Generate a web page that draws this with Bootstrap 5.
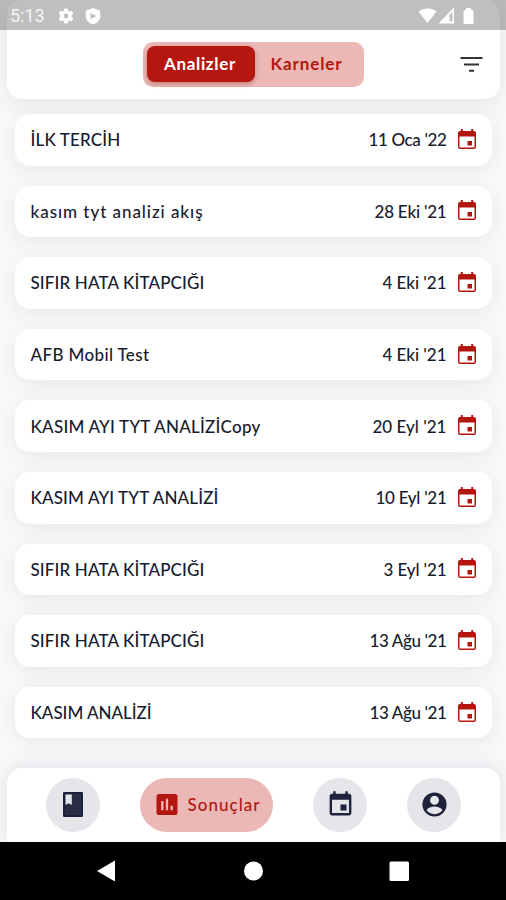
<!DOCTYPE html>
<html lang="tr">
<head>
<meta charset="utf-8">
<meta name="viewport" content="width=device-width, initial-scale=1">
<title>Sonuçlar</title>
<link href="https://cdn.jsdelivr.net/npm/bootstrap@5.3.0/dist/css/bootstrap.min.css" rel="stylesheet">
<style>
body{font-family:Lato,"Noto Sans",sans-serif;background:#f9f9fa;color:#191b2e;font-size:17px;font-weight:500;line-height:1}
.screen{height:900px}
.statusbar{height:30px;background:rgba(0,0,0,.25);color:#f4f4f4;font:400 18px/30px Roboto,sans-serif;padding:1px 32px 0 10px}
.topbar{height:98.5px;margin:0 6px 0 7px;border-radius:15px;background:#fff;box-shadow:0 4px 22px rgba(50,50,95,.1);padding-top:42px}
.switcher{width:221px;height:44.5px;margin-left:136px;border-radius:10px;background:#ebb8b5;padding:4px;color:#b3150f;font-size:17px;font-weight:700}
.switcher .btn{font:inherit;border:0;line-height:1;padding:0 2px 1px 0;border-radius:8px}
.seg-on{width:108px;height:36px;background:#b51710;color:#fff;box-shadow:0 2px 5px rgba(120,20,10,.35)}
.seg-on:hover{background:#b51710;color:#fff}
.seg-off{color:#b3150f;width:105px}
.results{gap:20px;padding:15.5px 14px 0 15px}
.result{height:51.6px;border:0;border-radius:15px;background:#fff;padding:0 12.5px 0 15.5px;box-shadow:0 4px 20px rgba(50,50,80,.09)}
.result svg{margin-left:7px}
.tabbar{height:73.5px;margin:0 6px 0 7px;border-radius:15px 15px 0 0;background:#fff;box-shadow:0 -2px 20px rgba(50,50,95,.12);padding:9.5px 39px 0;gap:40px}
.tab{height:54px;width:54px;border-radius:27px;background:#e5e5ea;color:#20223c}
.tab-on{width:133px;background:#ebb8b5;color:#b3150f;gap:7px}
.keys{height:58.5px;background:#000}
</style>
<script src="https://cdn.jsdelivr.net/npm/bootstrap@5.3.0/dist/js/bootstrap.bundle.min.js"></script>
</head>
<body>
<svg class="d-none" xmlns="http://www.w3.org/2000/svg">
<symbol id="cal" viewBox="0 0 24 24"><path fill="currentColor" d="M17 12h-5v5h5v-5zM16 1v2H8V1H6v2H5c-1.1 0-2 .9-2 2v14c0 1.1.9 2 2 2h14c1.1 0 2-.9 2-2V5c0-1.1-.9-2-2-2h-1V1h-2zm3 18H5V8h14v11z"/></symbol>
<symbol id="cal-thin" viewBox="0 0 24 24"><path fill="currentColor" d="M17 13h-4.500v4.500H17V13zM16.200 1v2H7.800V1H5.800v2H5c-1.100 0-2 .9-2 2v14c0 1.100.9 2 2 2h14c1.100 0 2-.9 2-2V5c0-1.100-.9-2-2-2h-.8V1h-2zm3.300 18.500h-15V8.500h15v11z"/></symbol>
</svg>
<div class="screen d-flex flex-column position-relative overflow-hidden">
<div class="statusbar d-flex align-items-center position-absolute top-0 start-0 w-100 z-1">
<span id="clock">5:13</span>
<svg style="margin-left:12px" width="18" height="18" viewBox="0 0 24 24" fill="#fff"><path d="M19.4 13c0-.3.1-.6.1-1s0-.7-.1-1l2.1-1.600c.2-.2.2-.4.1-.6l-2-3.500c-.1-.2-.3-.3-.6-.2l-2.500 1c-.5-.4-1.100-.7-1.700-1l-.4-2.600c0-.3-.2-.4-.4-.4h-4c-.3 0-.5.100-.5.400l-.4 2.600c-.6.3-1.200.6-1.700 1l-2.500-1c-.2-.1-.5 0-.6.2l-2 3.500c-.1.200-.1.500.1.600L4.600 11v2l-2.100 1.600c-.2.100-.3.400-.1.600l2 3.500c.1.200.3.300.6.200l2.500-1c.5.400 1.100.7 1.700 1l.4 2.600c0 .3.200.4.500.4h4c.2 0 .5-.1.500-.4l.4-2.600c.6-.3 1.200-.6 1.700-1l2.500 1c.2.100.5 0 .6-.2l2-3.500c.1-.2.1-.4-.1-.6L19.400 13zM12 15.200a3.200 3.200 0 110-6.400 3.200 3.200 0 010 6.400z"/></svg>
<svg style="margin-left:10px" width="16" height="18" viewBox="0 0 16 18"><path fill="#fff" d="M8 1l7.200 2.800v5.400C15.200 13.200 12 16.300 8 17.300 4 16.300.8 13.200.8 9.200V3.800z"/><path fill="#bfbfbf" d="M5.500 6L11.500 8.900 5.500 12z"/></svg>
<svg class="ms-auto" width="19" height="17" viewBox="0 0 19 17"><path fill="#fff" d="M.5 4.500C5.500.5 13.500.5 18.500 4.500L9.500 16z"/></svg>
<svg style="margin-left:1px" width="17" height="17" viewBox="0 0 17 17"><path fill="#fff" fill-rule="evenodd" d="M16 .5V16.500H.5zM14.500 4.500l-3 3.200v6.800h3z"/></svg>
<svg style="margin-left:8px" width="11" height="18" viewBox="0 0 11 18"><path fill="#fff" d="M3 1h5v2h1.500l1 1V16.500l-1 .5h-8L.5 16.500V4l1-1H3z"/></svg>
</div>
<header class="topbar d-flex flex-shrink-0 align-items-start position-relative">
<div class="switcher d-flex align-items-center">
<button class="btn seg-on"><span data-w="72">Analizler</span></button>
<button class="btn seg-off"><span data-w="72">Karneler</span></button>
</div>
<svg class="ms-auto" style="margin:14px 17.500px 0 0" width="23" height="17" viewBox="0 0 23 17"><path stroke="#000" stroke-opacity=".8" stroke-width="2" d="M.5 2h22M4 8.500h15M9 14.700h5"/></svg>
</header>
<main class="results d-flex flex-column flex-grow-1">
<div class="result card flex-row align-items-center"><span data-w="90">İLK TERCİH</span><span class="ms-auto" data-w="78">11 Oca '22</span><svg width="26" height="24" color="#b3150f"><use href="#cal-thin"/></svg></div>
<div class="result card flex-row align-items-center"><span data-w="173">kasım tyt analizi akış</span><span class="ms-auto" data-w="72">28 Eki '21</span><svg width="26" height="24" color="#b3150f"><use href="#cal-thin"/></svg></div>
<div class="result card flex-row align-items-center"><span data-w="174">SIFIR HATA KİTAPCIĞI</span><span class="ms-auto" data-w="64">4 Eki '21</span><svg width="26" height="24" color="#b3150f"><use href="#cal-thin"/></svg></div>
<div class="result card flex-row align-items-center"><span data-w="119">AFB Mobil Test</span><span class="ms-auto" data-w="64">4 Eki '21</span><svg width="26" height="24" color="#b3150f"><use href="#cal-thin"/></svg></div>
<div class="result card flex-row align-items-center"><span data-w="230">KASIM AYI TYT ANALİZİCopy</span><span class="ms-auto" data-w="74">20 Eyl '21</span><svg width="26" height="24" color="#b3150f"><use href="#cal-thin"/></svg></div>
<div class="result card flex-row align-items-center"><span data-w="188">KASIM AYI TYT ANALİZİ</span><span class="ms-auto" data-w="71">10 Eyl '21</span><svg width="26" height="24" color="#b3150f"><use href="#cal-thin"/></svg></div>
<div class="result card flex-row align-items-center"><span data-w="174">SIFIR HATA KİTAPCIĞI</span><span class="ms-auto" data-w="63">3 Eyl '21</span><svg width="26" height="24" color="#b3150f"><use href="#cal-thin"/></svg></div>
<div class="result card flex-row align-items-center"><span data-w="174">SIFIR HATA KİTAPCIĞI</span><span class="ms-auto" data-w="77">13 Ağu '21</span><svg width="26" height="24" color="#b3150f"><use href="#cal-thin"/></svg></div>
<div class="result card flex-row align-items-center"><span data-w="121">KASIM ANALİZİ</span><span class="ms-auto" data-w="77">13 Ağu '21</span><svg width="26" height="24" color="#b3150f"><use href="#cal-thin"/></svg></div>
</main>
<nav class="tabbar d-flex flex-shrink-0 align-items-start position-relative">
<div class="tab d-flex align-items-center justify-content-center"><svg width="20" height="25" viewBox="0 0 20 25"><rect width="20" height="25" rx="2" fill="#2b2d45"/><path fill="none" stroke="#191b3a" stroke-width="1.500" d="M1 1h18v23H1z"/><path fill="#e5e5ea" d="M2.500 2.500h6.300V13L5.600 11.200 2.500 13z"/></svg></div>
<div class="tab tab-on d-flex align-items-center justify-content-center"><svg width="28" height="29" viewBox="0 0 24 24"><path fill="#b3150f" d="M19 3H5c-1.100 0-2 .9-2 2v14c0 1.100.9 2 2 2h14c1.100 0 2-.9 2-2V5c0-1.100-.9-2-2-2zM9 17H7V9h2v8zm4 0h-2V7h2v10zm4 0h-2v-4h2v4z"/></svg><span data-w="73">Sonuçlar</span></div>
<div class="tab d-flex align-items-center justify-content-center"><svg width="29" height="29"><use href="#cal"/></svg></div>
<div class="tab d-flex align-items-center justify-content-center"><svg width="29" height="29" viewBox="0 0 24 24"><path fill="#20223c" fill-rule="evenodd" d="M12 2a10 10 0 100 20 10 10 0 000-20zm0 2.800a3.700 3.700 0 110 7.400 3.700 3.700 0 010-7.400zM12 20c-2.800 0-5.200-1.300-6.600-3.400C6.500 14.700 9.500 13.600 12 13.600s5.500 1.100 6.600 3C17.200 18.700 14.800 20 12 20z"/></svg></div>
</nav>
<div class="keys flex-shrink-0"><svg class="d-block" width="506" height="58" fill="#fff"><path d="M97 29L115 18.500v21z"/><circle cx="253.500" cy="29" r="9.500"/><rect x="389.500" y="19.500" width="19.500" height="19.500" rx="1.500"/></svg></div>
</div>
<script>
// Even out label widths by tracking each one to its data-w value.
document.querySelectorAll('[data-w]').forEach(function (el) {
  var w = el.getBoundingClientRect().width, n = el.textContent.length;
  el.style.whiteSpace = 'nowrap';
  el.style.letterSpacing = ((el.dataset.w - w) / n).toFixed(3) + 'px';
});
</script>
</body>
</html>
